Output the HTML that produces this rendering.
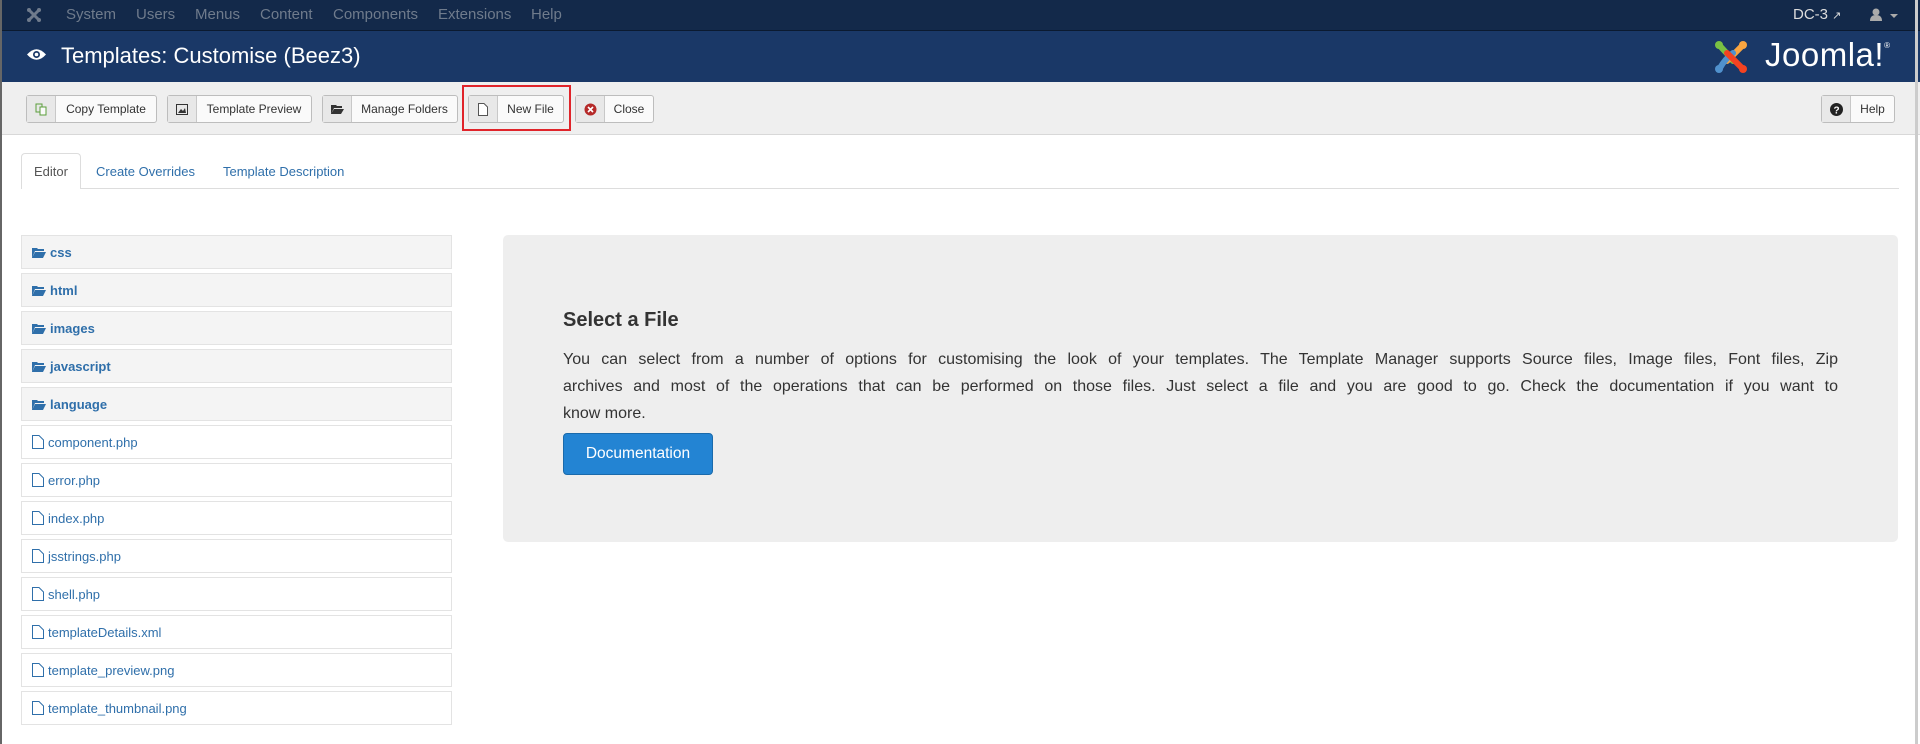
<!DOCTYPE html>
<html><head><meta charset="utf-8"><style>
*{margin:0;padding:0;box-sizing:border-box}
body{width:1920px;height:744px;overflow:hidden;background:#fff;font-family:"Liberation Sans",sans-serif;position:relative}
.abs{position:absolute}
#top{left:0;top:0;width:1920px;height:31px;background:#13294a;border-bottom:1px solid #0b1a30}
#top span{position:absolute;top:6px;font-size:15px;color:#6f7b8c}
#hdr{left:0;top:31px;width:1920px;height:51px;background:#1a3867}
#tb{left:0;top:82px;width:1920px;height:53px;background:#efefef;border-bottom:1px solid #d8d8d8}
.btn{position:absolute;top:95px;height:28px;border:1px solid #bdbdbd;border-radius:3px;background:#fafafa;font-size:12px;color:#333;display:flex}
.btn .ic{width:29px;height:100%;background:#e8e8e8;border-right:1px solid #c8c8c8;display:flex;align-items:center;justify-content:center}
.btn .tx{flex:1;display:flex;align-items:center;justify-content:center}
.item{position:absolute;left:21px;width:431px;height:34px;border:1px solid #e3e3e3;font-size:13px;color:#2f6faa;padding:9px 0 0 10px;display:flex;gap:4px}
.fold{background:#f4f4f4;font-weight:bold}
.file{background:#fff}
p.l{font-size:16px;color:#333;width:1275px;text-align:justify;text-align-last:justify;height:27px;line-height:27px;white-space:nowrap}
</style></head><body>
<div class="abs" style="left:0;top:0;width:2px;height:744px;background:#666;z-index:5"></div>
<div class="abs" style="left:1915px;top:0;width:3px;height:744px;background:#ccc;z-index:5"></div>
<div id="top" class="abs">
<svg class="abs" style="left:26px;top:7px" width="16" height="16" viewBox="0 0 16 16"><g stroke="#6f7b8c" stroke-width="3" stroke-linecap="round"><path d="M3 3L13 13M13 3L3 13"/></g><circle cx="3" cy="3" r="2" fill="#6f7b8c"/><circle cx="13" cy="3" r="2" fill="#6f7b8c"/><circle cx="3" cy="13" r="2" fill="#6f7b8c"/><circle cx="13" cy="13" r="2" fill="#6f7b8c"/></svg>
<span style="left:66px">System</span><span style="left:136px">Users</span><span style="left:195px">Menus</span><span style="left:260px">Content</span><span style="left:333px">Components</span><span style="left:438px">Extensions</span><span style="left:531px">Help</span>
<span style="left:1793px;color:#ddd">DC-3 <small style="font-size:11px">&#x2197;</small></span>
<svg class="abs" style="left:1870px;top:8px" width="12" height="13" viewBox="0 0 12 13"><circle cx="6" cy="4" r="3.5" fill="#aaa"/><path d="M0 13Q0 7 6 7Q12 7 12 13Z" fill="#aaa"/></svg>
<svg class="abs" style="left:1890px;top:14px" width="8" height="5"><path d="M0 0H8L4 4Z" fill="#aaa"/></svg>
</div>
<div id="hdr" class="abs">
<svg class="abs" style="left:27px;top:17px" width="19" height="13" viewBox="0 0 19 13"><path d="M0 6.5Q9.5 -4 19 6.5Q9.5 17 0 6.5Z" fill="#fff"/><circle cx="9.5" cy="6.5" r="3.5" fill="#1a3867"/><circle cx="9.5" cy="6.5" r="1.8" fill="#fff"/></svg>
<div class="abs" style="left:61px;top:12px;font-size:22px;color:#fff">Templates: Customise (Beez3)</div>
<svg class="abs" style="left:1713px;top:8px" width="36" height="36" viewBox="0 0 36 36"><g stroke-width="6" stroke-linecap="round" fill="none"><path d="M7 7Q14 14 20 22" stroke="#7ac143"/><path d="M29 7Q22 14 14 22" stroke="#f9a541"/><path d="M7 29Q12 20 20 14" stroke="#5091cd"/><path d="M29 29Q22 22 14 14" stroke="#f44321"/></g><circle cx="6" cy="6" r="4" fill="#7ac143"/><circle cx="30" cy="6" r="4" fill="#f9a541"/><circle cx="6" cy="30" r="4" fill="#5091cd"/><circle cx="30" cy="30" r="4" fill="#f44321"/></svg>
<div class="abs" style="left:1765px;top:5px;font-size:33px;color:#fff;font-weight:normal;letter-spacing:0.5px">Joomla!<sup style="font-size:8px;vertical-align:18px">®</sup></div>
</div>
<div id="tb" class="abs"></div>
<div class="btn" style="left:26px;width:131px"><div class="ic"><svg width="12" height="13"><rect x="1" y="1" width="6" height="8" fill="none" stroke="#5a9e3a"/><rect x="5" y="4" width="6" height="8" fill="#fafafa" stroke="#5a9e3a"/></svg></div><div class="tx">Copy Template</div></div>
<div class="btn" style="left:167px;width:145px"><div class="ic"><svg width="12" height="11"><rect x="0.5" y="0.5" width="11" height="10" fill="none" stroke="#333"/><path d="M2 9L5 5L7 7L9 4L10 9Z" fill="#333"/></svg></div><div class="tx">Template Preview</div></div>
<div class="btn" style="left:322px;width:136px"><div class="ic"><svg width="13" height="10"><path d="M0 1H5L6 2H11V4H3L0 10Z M3 5H13L10 10H0Z" fill="#333"/></svg></div><div class="tx">Manage Folders</div></div>
<div class="abs" style="left:462px;top:85px;width:109px;height:46px;border:2px solid #e0242a"></div>
<div class="btn" style="left:468px;width:96px"><div class="ic"><svg width="10" height="13"><path d="M0.5 0.5H6L9.5 4V12.5H0.5Z" fill="#fff" stroke="#555"/></svg></div><div class="tx">New File</div></div>
<div class="btn" style="left:575px;width:79px"><div class="ic"><svg width="13" height="13"><circle cx="6.5" cy="6.5" r="6" fill="#b52a29"/><path d="M4 4L9 9M9 4L4 9" stroke="#fff" stroke-width="1.6"/></svg></div><div class="tx">Close</div></div>
<div class="btn" style="left:1821px;width:74px"><div class="ic"><svg width="13" height="13"><circle cx="6.5" cy="6.5" r="6.5" fill="#222"/><text x="6.5" y="10.5" font-size="10" font-weight="bold" text-anchor="middle" fill="#fff" font-family="Liberation Sans">?</text></svg></div><div class="tx">Help</div></div>
<div class="abs" style="left:21px;top:188px;width:1878px;height:1px;background:#ddd"></div>
<div class="abs" style="left:21px;top:153px;width:60px;height:36px;border:1px solid #ddd;border-bottom:none;background:#fff;border-radius:4px 4px 0 0;font-size:13px;color:#555;padding:10px 0 0 12px">Editor</div>
<div class="abs" style="left:96px;top:164px;font-size:13px;color:#2f6faa">Create Overrides</div>
<div class="abs" style="left:223px;top:164px;font-size:13px;color:#2f6faa">Template Description</div>

<div class="item fold" style="top:235px"><svg width="14" height="12" style="margin-top:2px"><path d="M0 1H5L6 2H12V4H3L0 11Z M3 5H14L11 11H0Z" fill="#2f6faa"/></svg>css</div>
<div class="item fold" style="top:273px"><svg width="14" height="12" style="margin-top:2px"><path d="M0 1H5L6 2H12V4H3L0 11Z M3 5H14L11 11H0Z" fill="#2f6faa"/></svg>html</div>
<div class="item fold" style="top:311px"><svg width="14" height="12" style="margin-top:2px"><path d="M0 1H5L6 2H12V4H3L0 11Z M3 5H14L11 11H0Z" fill="#2f6faa"/></svg>images</div>
<div class="item fold" style="top:349px"><svg width="14" height="12" style="margin-top:2px"><path d="M0 1H5L6 2H12V4H3L0 11Z M3 5H14L11 11H0Z" fill="#2f6faa"/></svg>javascript</div>
<div class="item fold" style="top:387px"><svg width="14" height="12" style="margin-top:2px"><path d="M0 1H5L6 2H12V4H3L0 11Z M3 5H14L11 11H0Z" fill="#2f6faa"/></svg>language</div>
<div class="item file" style="top:425px"><svg width="12" height="14"><path d="M0.5 0.5H7L11.5 5V13.5H0.5Z" fill="#fff" stroke="#2f6faa"/></svg>component.php</div>
<div class="item file" style="top:463px"><svg width="12" height="14"><path d="M0.5 0.5H7L11.5 5V13.5H0.5Z" fill="#fff" stroke="#2f6faa"/></svg>error.php</div>
<div class="item file" style="top:501px"><svg width="12" height="14"><path d="M0.5 0.5H7L11.5 5V13.5H0.5Z" fill="#fff" stroke="#2f6faa"/></svg>index.php</div>
<div class="item file" style="top:539px"><svg width="12" height="14"><path d="M0.5 0.5H7L11.5 5V13.5H0.5Z" fill="#fff" stroke="#2f6faa"/></svg>jsstrings.php</div>
<div class="item file" style="top:577px"><svg width="12" height="14"><path d="M0.5 0.5H7L11.5 5V13.5H0.5Z" fill="#fff" stroke="#2f6faa"/></svg>shell.php</div>
<div class="item file" style="top:615px"><svg width="12" height="14"><path d="M0.5 0.5H7L11.5 5V13.5H0.5Z" fill="#fff" stroke="#2f6faa"/></svg>templateDetails.xml</div>
<div class="item file" style="top:653px"><svg width="12" height="14"><path d="M0.5 0.5H7L11.5 5V13.5H0.5Z" fill="#fff" stroke="#2f6faa"/></svg>template_preview.png</div>
<div class="item file" style="top:691px"><svg width="12" height="14"><path d="M0.5 0.5H7L11.5 5V13.5H0.5Z" fill="#fff" stroke="#2f6faa"/></svg>template_thumbnail.png</div>

<div class="abs" style="left:503px;top:235px;width:1395px;height:307px;background:#eee;border-radius:5px"></div>
<div class="abs" style="left:563px;top:309px;font-size:20px;font-weight:bold;color:#333">Select a File</div>
<div class="abs" style="left:563px;top:346px">
<p class="l">You can select from a number of options for customising the look of your templates. The Template Manager supports Source files, Image files, Font files, Zip</p>
<p class="l">archives and most of the operations that can be performed on those files. Just select a file and you are good to go. Check the documentation if you want to</p>
<p class="l" style="text-align-last:left">know more.</p>
</div>
<div class="abs" style="left:563px;top:433px;width:150px;height:42px;background:#2384d3;border:1px solid #1a6aab;border-radius:4px;color:#fff;font-size:15.5px;display:flex;align-items:center;justify-content:center">Documentation</div>
</body></html>
